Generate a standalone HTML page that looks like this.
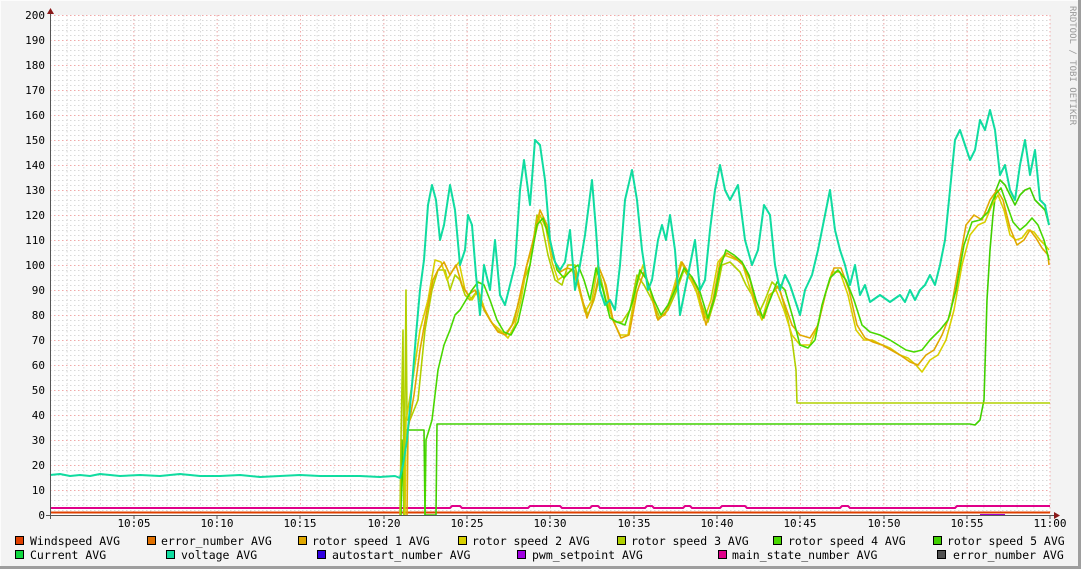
<!DOCTYPE html>
<html><head><meta charset="utf-8"><style>
html,body{margin:0;padding:0;background:#f3f3f3;}
svg{display:block}
text{font-family:"DejaVu Sans Mono","Liberation Mono",monospace;}
</style></head><body>
<svg width="1081" height="569" viewBox="0 0 1081 569" xmlns="http://www.w3.org/2000/svg">
<defs>
<pattern id="hmin" x="50" y="15" width="4" height="5" patternUnits="userSpaceOnUse"><rect width="1.5" height="1" fill="#d8d8d8"/></pattern>
<pattern id="vmin" x="50" y="15" width="16.6667" height="4" patternUnits="userSpaceOnUse"><rect width="1" height="1.5" fill="#d8d8d8"/></pattern>
<pattern id="hmaj" x="50" y="15" width="4" height="25" patternUnits="userSpaceOnUse"><rect width="1.5" height="1" fill="#f0a8a8"/></pattern>
<pattern id="vmaj" x="50" y="15" width="83.3333" height="4" patternUnits="userSpaceOnUse"><rect width="1" height="1.5" fill="#f0a8a8"/></pattern>
</defs>
<rect x="0" y="0" width="1081" height="569" fill="#f3f3f3"/>
<line x1="0" y1="0.5" x2="1081" y2="0.5" stroke="#fcfcfc"/>
<line x1="0.5" y1="0" x2="0.5" y2="569" stroke="#fcfcfc"/>
<line x1="0" y1="567.5" x2="1081" y2="567.5" stroke="#9e9e9e" stroke-width="3"/>
<line x1="1079.5" y1="0" x2="1079.5" y2="569" stroke="#9e9e9e" stroke-width="3"/>
<rect x="50" y="15" width="1000" height="500" fill="#fff"/>
<rect x="50" y="15" width="1000" height="500" fill="url(#hmin)"/>
<rect x="50" y="15" width="1000" height="500" fill="url(#vmin)"/>
<rect x="50" y="15" width="1000" height="500" fill="url(#hmaj)"/>
<rect x="50" y="15" width="1000" height="500" fill="url(#vmaj)"/>
<line x1="1050" y1="15" x2="1050" y2="515" stroke="#f0a8a8" stroke-dasharray="1.5 2.5"/>

<g fill="none" stroke-width="2" stroke-linejoin="round">
<!-- bottom constant lines -->
<polyline stroke="#e04000" points="50,512.5 1050,512.5"/>
<polyline stroke="#e0008a" points="50,508 450,508 452,506 460,506 462,508 528,508 530,506 560,506 562,508 590,508 592,506 598,506 600,508 645,508 647,506 652,506 654,508 683,508 685,506 690,506 692,508 720,508 722,506 745,506 747,508 840,508 842,506 848,506 850,508 955,508 957,506 1050,506"/>
<polyline stroke="#a000d0" points="980,515 1005,515"/>
<!-- rotor speed 5 -->
<polyline stroke="#40d000" stroke-width="1.6" points="401,515 402,440 404,515 406,430 424,430 425,515 436,515 437,424 970,424 975,425 980,420 984,400 987,300 990,250 993,215 996,190 1000,180 1005,185 1010,195 1015,205 1020,195 1025,190 1030,188 1035,200 1040,205 1045,210 1049,225"/>
<!-- rotor speed 3 -->
<polyline stroke="#b0d000" stroke-width="1.6" points="400,515 401,440 403,330 404,515 406,290 407,420 410,420 418,400 425,330 432,290 438,270 445,270 450,290 455,275 460,280 465,295 470,300 478,290 484,310 490,320 497,330 505,335 512,325 518,305 524,280 530,265 537,215 542,225 548,255 555,280 562,285 568,265 575,265 582,300 588,315 594,300 600,275 606,300 614,322 622,322 630,310 637,275 644,285 652,300 660,318 668,310 676,292 684,270 692,282 700,300 708,322 716,295 722,265 730,262 740,272 746,285 752,295 758,315 765,300 772,282 780,290 788,320 792,340 796,370 797,403 1050,403"/>
<!-- rotor speed 2 -->
<polyline stroke="#d8d000" stroke-width="1.6" points="405,515 406,420 412,385 420,330 428,300 435,260 441,262 447,280 453,270 459,262 465,290 472,300 478,290 485,310 492,323 500,330 508,338 515,325 521,300 527,265 533,245 540,215 546,228 552,262 558,280 565,275 572,270 578,285 585,312 592,300 598,265 604,280 612,318 620,335 628,335 636,288 643,265 650,290 657,318 665,315 673,290 681,262 688,275 696,290 704,320 711,300 718,262 724,255 732,258 742,262 748,282 755,305 762,320 769,295 776,290 784,310 792,335 800,345 810,345 817,328 825,295 832,272 840,272 848,295 856,330 864,340 872,340 880,344 890,348 900,355 908,358 916,365 922,372 930,360 938,355 946,340 954,310 962,265 970,235 978,225 985,222 992,205 998,195 1004,210 1010,235 1016,240 1022,238 1028,230 1034,232 1040,240 1045,245 1049,250"/>
<!-- rotor speed 1 -->
<polyline stroke="#e0a800" stroke-width="1.6" points="407,515 408,430 414,395 420,350 427,310 433,280 438,270 444,262 450,275 456,265 462,285 468,295 475,290 482,305 490,320 498,332 506,335 514,322 520,295 526,268 532,245 540,210 547,225 553,258 560,272 567,268 574,270 580,290 587,318 594,298 600,270 606,285 613,320 621,338 629,335 637,292 644,272 651,292 658,320 666,312 674,292 682,262 690,275 698,290 706,325 713,300 720,262 727,253 735,258 743,265 750,280 757,310 764,318 771,295 778,286 785,305 792,325 800,335 810,338 818,325 826,292 834,268 841,268 849,290 857,325 865,338 873,342 882,345 891,350 900,355 910,362 918,365 926,355 934,350 942,335 950,315 958,270 966,225 974,215 982,220 990,200 997,190 1003,200 1010,228 1017,245 1024,240 1030,230 1036,238 1042,248 1048,255 1049,265"/>
<!-- rotor speed 4 -->
<polyline stroke="#48d800" stroke-width="1.6" points="425,515 426,440 432,420 438,370 444,345 450,330 455,315 460,310 466,300 472,290 478,282 484,285 490,300 497,320 504,332 511,335 518,322 524,295 530,265 537,225 543,218 550,240 557,270 564,278 571,270 578,265 584,280 590,300 596,268 603,290 610,318 617,322 625,325 633,300 640,270 647,280 654,300 661,315 668,305 676,288 684,268 692,277 700,292 708,318 714,300 720,268 726,250 734,255 742,262 749,275 756,300 763,318 770,300 777,282 785,290 793,318 800,345 808,348 815,340 822,305 830,278 838,270 846,280 854,300 862,325 870,332 880,335 890,340 898,345 906,350 914,352 922,350 930,340 940,330 948,320 956,290 964,245 972,222 980,220 988,212 995,195 1001,188 1007,205 1013,222 1020,230 1026,225 1032,218 1038,225 1044,240 1049,260"/>
<!-- voltage -->
<polyline stroke="#10dca0" stroke-width="2" points="50,475 60,474 70,476 80,475 90,476 100,474 120,476 140,475 160,476 180,474 200,476 220,476 240,475 260,477 280,476 300,475 320,476 340,476 360,476 380,477 395,476 400,478 403,465 407,440 412,385 416,335 420,290 424,260 428,205 432,185 436,200 440,240 444,225 450,185 455,210 460,265 465,250 468,215 472,225 476,275 480,315 484,265 490,290 495,240 500,295 505,305 510,285 515,265 520,190 524,160 530,205 535,140 540,145 545,180 550,240 555,262 560,270 565,262 570,230 575,290 580,265 585,235 592,180 596,230 600,290 605,305 610,300 615,310 620,265 625,200 632,170 637,200 642,250 648,290 652,280 658,240 662,225 666,240 670,215 675,250 680,315 685,290 690,265 695,240 700,290 705,280 710,230 715,190 720,165 725,190 730,200 738,185 745,240 752,265 758,250 764,205 770,215 775,265 780,290 785,275 790,285 795,300 800,315 805,290 812,275 818,250 823,225 830,190 835,230 840,250 845,265 850,285 855,265 860,295 865,285 870,302 880,295 890,302 900,295 905,302 910,290 915,300 920,290 925,285 930,275 935,285 940,265 945,240 950,190 955,140 960,130 965,145 970,160 975,150 980,120 985,130 990,110 995,130 1000,175 1005,165 1010,190 1015,200 1020,165 1025,140 1030,175 1035,150 1040,200 1045,205 1049,225"/>
</g>

<!-- axes -->
<line x1="50.5" y1="10" x2="50.5" y2="519" stroke="#555"/>
<line x1="46" y1="515.5" x2="1055" y2="515.5" stroke="#555"/>
<polygon points="47,14 54,14 50.5,8" fill="#8b1a1a"/>
<polygon points="1054,512 1054,519 1060,515.5" fill="#8b1a1a"/>
<g stroke="#555">
<line x1="134" y1="515" x2="134" y2="519"/><line x1="217" y1="515" x2="217" y2="519"/><line x1="300" y1="515" x2="300" y2="519"/><line x1="384" y1="515" x2="384" y2="519"/><line x1="467" y1="515" x2="467" y2="519"/><line x1="550" y1="515" x2="550" y2="519"/><line x1="634" y1="515" x2="634" y2="519"/><line x1="717" y1="515" x2="717" y2="519"/><line x1="800" y1="515" x2="800" y2="519"/><line x1="884" y1="515" x2="884" y2="519"/><line x1="967" y1="515" x2="967" y2="519"/><line x1="1050" y1="515" x2="1050" y2="519"/>
</g>

<g font-size="11" fill="#000" text-anchor="end">
<text x="45" y="19">200</text><text x="45" y="44">190</text><text x="45" y="69">180</text><text x="45" y="94">170</text><text x="45" y="119">160</text><text x="45" y="144">150</text><text x="45" y="169">140</text><text x="45" y="194">130</text><text x="45" y="219">120</text><text x="45" y="244">110</text><text x="45" y="269">100</text><text x="45" y="294">90</text><text x="45" y="319">80</text><text x="45" y="344">70</text><text x="45" y="369">60</text><text x="45" y="394">50</text><text x="45" y="419">40</text><text x="45" y="444">30</text><text x="45" y="469">20</text><text x="45" y="494">10</text><text x="45" y="519">0</text>
</g>
<g font-size="11" fill="#000" text-anchor="middle">
<text x="134" y="527">10:05</text><text x="217" y="527">10:10</text><text x="300" y="527">10:15</text><text x="384" y="527">10:20</text><text x="467" y="527">10:25</text><text x="550" y="527">10:30</text><text x="634" y="527">10:35</text><text x="717" y="527">10:40</text><text x="800" y="527">10:45</text><text x="884" y="527">10:50</text><text x="967" y="527">10:55</text><text x="1050" y="527">11:00</text>
</g>

<text transform="translate(1070,6) rotate(90)" font-size="9" fill="#999">RRDTOOL / TOBI OETIKER</text>

<g font-size="11.5" fill="#000" stroke="#000" stroke-width="0">
<g stroke="#000" stroke-width="1">
<rect x="15.5" y="536.5" width="8" height="8" fill="#e04000"/>
<rect x="147.5" y="536.5" width="8" height="8" fill="#e07000"/>
<rect x="298.5" y="536.5" width="8" height="8" fill="#e0a800"/>
<rect x="458.5" y="536.5" width="8" height="8" fill="#d8d000"/>
<rect x="617.5" y="536.5" width="8" height="8" fill="#b0d000"/>
<rect x="773.5" y="536.5" width="8" height="8" fill="#48d800"/>
<rect x="933.5" y="536.5" width="8" height="8" fill="#40d000"/>
<rect x="15.5" y="550.5" width="8" height="8" fill="#10d840"/>
<rect x="166.5" y="550.5" width="8" height="8" fill="#10dca0"/>
<rect x="317.5" y="550.5" width="8" height="8" fill="#3000e0"/>
<rect x="517.5" y="550.5" width="8" height="8" fill="#a000e0"/>
<rect x="718.5" y="550.5" width="8" height="8" fill="#e0008a"/>
<rect x="937.5" y="550.5" width="8" height="8" fill="#505050"/>
</g>
<text x="30" y="545">Windspeed AVG</text>
<text x="161" y="545">error_number AVG</text>
<text x="312" y="545">rotor speed 1 AVG</text>
<text x="472" y="545">rotor speed 2 AVG</text>
<text x="631" y="545">rotor speed 3 AVG</text>
<text x="788" y="545">rotor speed 4 AVG</text>
<text x="947" y="545">rotor speed 5 AVG</text>
<text x="30" y="559">Current AVG</text>
<text x="181" y="559">voltage AVG</text>
<text x="332" y="559">autostart_number AVG</text>
<text x="532" y="559">pwm_setpoint AVG</text>
<text x="732" y="559">main_state_number AVG</text>
<text x="953" y="559">error_number AVG</text>
</g>
</svg>
</body></html>
